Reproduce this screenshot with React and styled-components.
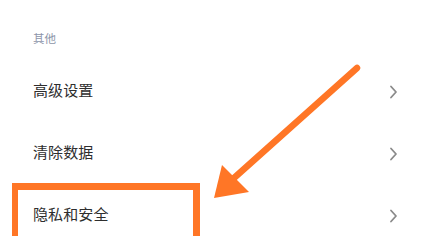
import React from "react";
import styled, { createGlobalStyle } from "styled-components";

const Global = createGlobalStyle`
  html, body { margin: 0; padding: 0; background: #fff; }
  body { font-family: "Noto Sans CJK SC", "Noto Sans", sans-serif; }
`;

const Page = styled.div`
  position: relative;
  width: 424px;
  height: 245px;
  overflow: hidden;
  background: #fff;
`;

const List = styled.div`
  display: flex;
  flex-direction: column;
`;

const SectionTitle = styled.div`
  height: 61px;
  box-sizing: border-box;
  padding: 31px 0 0 33px;
  font-size: 11.5px;
  line-height: 14px;
  color: #8d95a9;
`;

const Row = styled.div`
  height: 62px;
  display: flex;
  align-items: center;
  justify-content: space-between;
  padding: 0 26px 0 33px;
`;

const Label = styled.span`
  font-size: 15px;
  line-height: 20px;
  margin-bottom: 4px;
  color: #2e2e2e;
  letter-spacing: 0.1px;
`;

const Highlight = styled.div`
  position: absolute;
  left: 12px;
  top: 183px;
  width: 188px;
  height: 53px;
  box-sizing: border-box;
  border: 7px solid #ff7626;
  border-bottom: none;
  border-left-width: 6px;
  pointer-events: none;
`;

const ArrowLayer = styled.svg`
  position: absolute;
  left: 0;
  top: 0;
  pointer-events: none;
`;

const Chevron = () => (
  <svg width="10" height="14" viewBox="0 0 10 14">
    <path d="M3 1.5 L8 7 L3 12.5" fill="none" stroke="#8a8a8a" strokeWidth="1.8" strokeLinecap="round" strokeLinejoin="round" />
  </svg>
);

const items = ["高级设置", "清除数据", "隐私和安全"];

export default function App() {
  return (
    <Page>
      <Global />
      <List>
        <SectionTitle>其他</SectionTitle>
        {items.map((t) => (
          <Row key={t}>
            <Label>{t}</Label>
            <Chevron />
          </Row>
        ))}
      </List>
      <Highlight />
      <ArrowLayer width="424" height="245" viewBox="0 0 424 245">
        <line x1="357" y1="68" x2="234" y2="178" stroke="#ff7626" strokeWidth="6.5" strokeLinecap="round" />
        <polygon points="214,198 222,165 249,192" fill="#ff7626" />
      </ArrowLayer>
    </Page>
  );
}
